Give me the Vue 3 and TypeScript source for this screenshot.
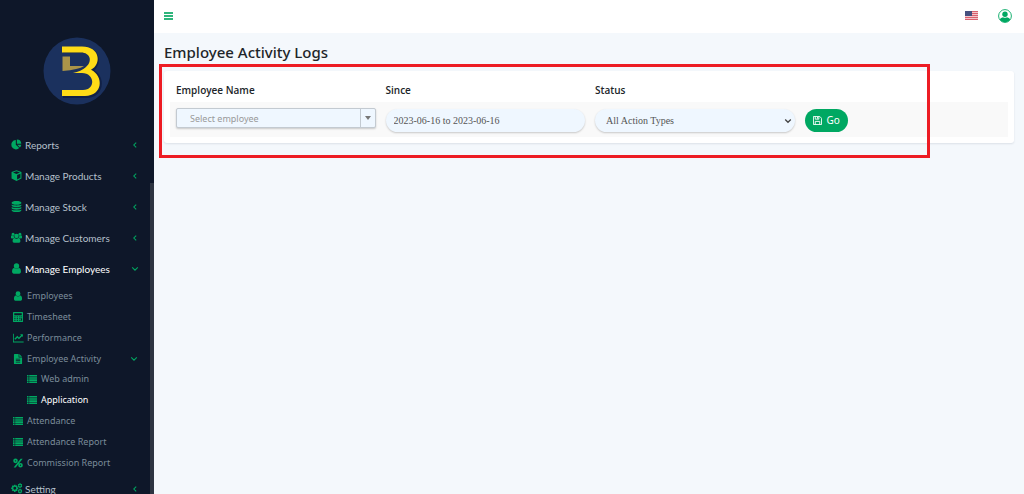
<script setup lang="ts">
import { ref } from 'vue'

interface NavItem {
  label: string
  icon: string
  arrow?: 'left' | 'down'
  active?: boolean
  nested?: boolean
}

const icons: Record<string, string> = {
  pie: 'M7 1.500A6.800 6.800 0 1 0 12 13L7 8.400zM8.500 .8V7H15A6.500 6.500 0 0 0 8.500 .8zM9 8.500L13 12.200A6.500 6.500 0 0 0 15 8.500z',
  cube: 'M8 .3L15.200 3V12.300L8 16L.8 12.300V3zM8 1.900L2.900 3.800L8 5.800L13.100 3.800zM8.900 7.400V13.800L13.700 11.300V5.500z',
  database: 'M8 0C12 0 15 1 15 2.300V3.400C15 4.600 12 5.600 8 5.600S1 4.600 1 3.400V2.300C1 1 4 0 8 0zM1 5.200C3.500 7 12.500 7 15 5.200V7C15 8.200 12 9.100 8 9.100S1 8.200 1 7zM1 8.700C3.500 10.500 12.500 10.500 15 8.700V10.500C15 11.700 12 12.600 8 12.600S1 11.700 1 10.500zM1 12.200C3.500 14 12.500 14 15 12.200V13.700C15 15 12 16 8 16S1 15 1 13.700z',
  users: 'M3 1A2.200 2.200 0 1 1 3 5.400A2.200 2.200 0 0 1 3 1zM13 1A2.200 2.200 0 1 1 13 5.400A2.200 2.200 0 0 1 13 1zM8 2.500A3.200 3.200 0 1 1 8 8.900A3.200 3.200 0 0 1 8 2.500zM0 9V6.500Q0 5 1.300 5.200Q3 6.400 4.200 5.800Q4.200 7.600 5 8.300Q3.500 8.300 2.700 9.300zM16 9V6.500Q16 5 14.700 5.200Q13 6.400 11.800 5.800Q11.800 7.600 11 8.300Q12.500 8.300 13.300 9.300zM2.300 13.500Q2.300 8.800 5 8.600Q8 10.800 11 8.600Q13.700 8.800 13.700 13.500Q13.700 15.500 11.700 15.500H4.300Q2.300 15.500 2.300 13.500z',
  user: 'M8 .5A3.900 3.900 0 1 1 8 8.300A3.900 3.900 0 0 1 8 .5zM4.500 7.300Q8 10.500 11.500 7.300Q14.500 7.500 14.500 12.900Q14.500 15.500 12.200 15.500H3.800Q1.500 15.500 1.500 12.900Q1.500 7.500 4.500 7.300z',
  calculator: 'M1 0H15Q16 0 16 1V15Q16 16 15 16H1Q0 16 0 15V1Q0 0 1 0zM2 2V5H14V2zM2 7V8.500H4V7zM6 7V8.500H8V7zM10 7V8.500H12V7zM13 7V8.500H14.500V7zM2 10V11.500H4V10zM6 10V11.500H8V10zM10 10V11.500H12V10zM13 10V14H14.500V10zM2 13V14.500H4V13zM6 13V14.500H8V13zM10 13V14.500H12V13z',
  chart: 'M0 1H1.300V13.700H17V15H0zM15.800 2V6.500L14.400 5.100L9.500 10L7 7.500L3.700 10.800L2.200 9.300L7 4.500L9.500 7L12.900 3.600L11.300 2z',
  file: 'M1.500 1Q1.500 0 2.500 0H9V5.500H14.500V15Q14.500 16 13.500 16H2.500Q1.500 16 1.500 15zM10 0L14.500 4.500H10zM4.500 7.500V8.700H11.500V7.500zM4.500 10V11.200H11.500V10zM4.500 12.500V13.700H11.500V12.500z',
  list: 'M0 1.500H2.500V4H0zM3.500 1.500H16V4H3.500zM0 5H2.500V7.500H0zM3.500 5H16V7.500H3.500zM0 8.500H2.500V11H0zM3.500 8.500H16V11H3.500zM0 12H2.500V14.500H0zM3.500 12H16V14.500H3.500z',
  percent: 'M12.200 1H15.500L4.300 15H1zM4 .8A3.700 3.700 0 1 1 4 8.200A3.700 3.700 0 0 1 4 .8zM4 3.500A1 1 0 1 0 4 5.500A1 1 0 0 0 4 3.500zM12 7.800A3.700 3.700 0 1 1 12 15.200A3.700 3.700 0 0 1 12 7.800zM12 10.500A1 1 0 1 0 12 12.500A1 1 0 0 0 12 10.500z',
  gears: 'M4.700 2.500H6.500L6.900 4.100L8.300 3.300L9.600 4.600L8.800 6L10.500 6.500V8.700L8.900 9.200L9.600 10.600L8.300 12L6.900 11.200L6.500 13H4.500L4 11.200L2.600 12L1.200 10.600L2 9.200L.3 8.700V6.600L2 6.100L1.200 4.700L2.600 3.300L4.100 4.100zM5.500 5.600A2.100 2.100 0 1 0 5.500 9.800A2.100 2.100 0 0 0 5.500 5.600zM12.300 .5H14L14.300 1.600L15.600 1.500L16.300 2.900L15.500 3.800L16.300 4.900L15.500 6.200L14.300 6L13.700 7.200H12.400L11.800 6L10.600 6.100L10 4.900L10.800 3.800L10 2.800L10.700 1.500L12 1.600zM13.100 2.700A1.200 1.200 0 1 0 13.100 5.100A1.200 1.200 0 0 0 13.100 2.700zM12.300 8.500H14L14.300 9.600L15.600 9.500L16.300 10.900L15.500 11.800L16.300 12.900L15.500 14.200L14.300 14L13.700 15.200H12.400L11.800 14L10.600 14.100L10 12.900L10.800 11.800L10 10.800L10.700 9.500L12 9.600zM13.100 10.700A1.200 1.200 0 1 0 13.100 13.100A1.200 1.200 0 0 0 13.100 10.700z',
}

const mainItems: NavItem[] = [
  { label: 'Reports', icon: 'pie', arrow: 'left' },
  { label: 'Manage Products', icon: 'cube', arrow: 'left' },
  { label: 'Manage Stock', icon: 'database', arrow: 'left' },
  { label: 'Manage Customers', icon: 'users', arrow: 'left' },
  { label: 'Manage Employees', icon: 'user', arrow: 'down', active: true },
]

const employeeItems: NavItem[] = [
  { label: 'Employees', icon: 'user' },
  { label: 'Timesheet', icon: 'calculator' },
  { label: 'Performance', icon: 'chart' },
  { label: 'Employee Activity', icon: 'file', arrow: 'down' },
  { label: 'Web admin', icon: 'list', nested: true },
  { label: 'Application', icon: 'list', nested: true, active: true },
  { label: 'Attendance', icon: 'list' },
  { label: 'Attendance Report', icon: 'list' },
  { label: 'Commission Report', icon: 'percent' },
]

const settingItems: NavItem[] = [{ label: 'Setting', icon: 'gears', arrow: 'left' }]

const groups = [
  { name: 'main', items: mainItems },
  { name: 'sub', items: employeeItems },
  { name: 'main', items: settingItems },
]

const arrows = { left: 'M6.500 2L3.500 5L6.500 8', down: 'M1.500 3L5 6.500L8.500 3' }

const employee = ref('')
const since = ref('2023-06-16 to 2023-06-16')
const status = ref('all')
</script>

<template>
  <div class="layout">
    <aside class="sidebar">
      <a class="brand" href="#" aria-label="Home">
        <svg viewBox="0 0 68 68">
          <circle cx="34" cy="34" r="33.500" fill="#1b315e" />
          <path d="M20 13H40C57 13 56 31 44 34C60 36 60 58 43 58H20" fill="none" stroke="#0b1738" stroke-width="6" opacity=".6" />
          <path d="M19.500 19.500H27V29H41Q36 32.500 19.500 34z" fill="#aa9449" />
          <path d="M19 9.500H39C57 9.500 59 27 48 32.800C61 39 60 59 42 59H19V53H40C53 53 52 36 39 36H30Q38 34.500 43 30C50 24 47 15.500 38 15.500H19z" fill="#ffdc17" />
        </svg>
      </a>
      <nav>
        <ul v-for="(group, index) in groups" :key="index" :class="group.name">
          <li v-for="item in group.items" :key="item.label">
            <a href="#" :class="{ active: item.active, nested: item.nested }">
              <svg class="icon" viewBox="0 0 16 16"><path :d="icons[item.icon]" fill-rule="evenodd" /></svg>
              <span>{{ item.label }}</span>
              <svg v-if="item.arrow" class="arrow" viewBox="0 0 10 10"><path :d="arrows[item.arrow]" /></svg>
            </a>
          </li>
        </ul>
      </nav>
      <div class="scroll-thumb"></div>
    </aside>

    <div class="content">
      <header>
        <button class="plain" type="button" aria-label="Toggle menu">
          <svg class="bars" viewBox="0 0 9 8"><path d="M0 0H9V2H0zM0 3H9V5H0zM0 6H9V8H0z" /></svg>
        </button>
        <div class="tools">
          <button class="plain" type="button" aria-label="Language">
            <svg class="flag" viewBox="0 0 13 9">
              <path fill="#f3c5cb" d="M0 0H13V9H0z" />
              <path fill="#d9606e" d="M0 0H13V1H0zM0 2H13V3H0zM0 4H13V5H0zM0 6H13V7H0zM0 8H13V9H0z" />
              <path fill="#46507f" d="M0 0H7V5H0z" />
            </svg>
          </button>
          <button class="plain" type="button" aria-label="Account">
            <svg class="account" viewBox="0 0 14 14">
              <circle cx="7" cy="7" r="6.400" fill="#fff" stroke="#00a862" stroke-width=".9" />
              <circle cx="7" cy="5.300" r="2.700" fill="#00a862" />
              <path d="M1.700 10.300Q3 8.500 5 8.200Q7 9.500 9 8.200Q11 8.500 12.300 10.300A6.300 6.300 0 0 1 1.700 10.300z" fill="#00a862" />
            </svg>
          </button>
        </div>
      </header>

      <main>
        <h1>Employee Activity Logs</h1>
        <form class="card" @submit.prevent>
          <table>
            <thead>
              <tr>
                <th scope="col"><label for="employee">Employee Name</label></th>
                <th scope="col"><label for="since">Since</label></th>
                <th scope="col"><label for="status">Status</label></th>
                <td></td>
              </tr>
            </thead>
            <tbody>
              <tr>
                <td>
                  <div class="combo">
                    <input id="employee" v-model="employee" type="text" placeholder="Select employee" />
                    <button type="button" aria-label="Show employees">
                      <svg viewBox="0 0 6 4"><path d="M0 0H6L3 4z" /></svg>
                    </button>
                  </div>
                </td>
                <td><input id="since" v-model="since" class="pill" type="text" /></td>
                <td>
                  <div class="select">
                    <select id="status" v-model="status" class="pill">
                      <option value="all">All Action Types</option>
                    </select>
                    <svg viewBox="0 0 8 8"><path d="M1.200 2.500L4 5.300L6.800 2.500" /></svg>
                  </div>
                </td>
                <td>
                  <button class="go" type="submit">
                    <svg viewBox="0 0 10 10">
                      <path d="M.5 .5H7.500L9.500 2.500V9.500H.5zM2.500 .5V3.500H6.500V.5M2.500 9.500V6H7.500V9.500" />
                      <path d="M5 1V3" />
                    </svg>
                    Go
                  </button>
                </td>
              </tr>
            </tbody>
          </table>
        </form>
        <div class="highlight"></div>
      </main>
    </div>
  </div>
</template>

<style>
body {
  margin: 0;
  background: #f4f8fc;
}
</style>

<style scoped>
* {
  box-sizing: border-box;
}

.layout {
  display: flex;
  height: 100vh;
  overflow: hidden;
  font-family: "Noto Sans", "Open Sans", sans-serif;
  font-size: 9px;
  color: #212529;
}

.sidebar {
  position: relative;
  flex: 0 0 154px;
  overflow: hidden;
  background: #0e1729;
  line-height: 12px;
}

.brand {
  display: block;
  width: 68px;
  margin: 37px auto 24px 43px;
}

.brand svg {
  display: block;
  width: 68px;
  height: 68px;
}

ul {
  margin: 0;
  padding: 0;
  list-style: none;
}

.sub {
  display: grid;
  grid-auto-rows: 1fr;
  height: 189px;
  padding-top: 2px;
}

nav a {
  display: flex;
  align-items: center;
  height: 100%;
  padding: 0 15px 0 11px;
  color: #b5c0cb;
  text-decoration: none;
  white-space: nowrap;
}

.main a {
  height: 31px;
  font-family: Lato, "Noto Sans", sans-serif;
  font-size: 10px;
}

.sub a {
  padding: 0 16px 0 13px;
  color: #7b8c9a;
}

.sub a.nested {
  padding-left: 27px;
}

nav a.active {
  color: #fff;
}

.icon {
  width: 11px;
  height: 11px;
  margin-right: 3px;
  overflow: visible;
  fill: #00a862;
}

.sub .icon {
  width: 10px;
  height: 10px;
  margin-right: 4px;
}

.arrow {
  width: 8px;
  height: 8px;
  margin-left: auto;
  fill: none;
  stroke: #00a862;
  stroke-width: 1.3;
}

.scroll-thumb {
  position: absolute;
  top: 183px;
  right: 0;
  bottom: 0;
  width: 4px;
  background: #2d3441;
}

.content {
  flex: 1;
  min-width: 0;
}

header {
  display: flex;
  align-items: center;
  justify-content: space-between;
  height: 33px;
  padding: 0 12px 2px 10px;
  background: #fff;
}

.tools {
  display: flex;
  align-items: center;
  gap: 20px;
}

button {
  font: inherit;
  cursor: pointer;
}

.plain {
  display: block;
  padding: 0;
  border: 0;
  background: none;
}

.plain svg {
  display: block;
}

.bars {
  width: 9px;
  height: 8px;
  fill: #2fb57c;
}

.flag {
  width: 13px;
  height: 9px;
}

.account {
  width: 14px;
  height: 14px;
}

main {
  position: relative;
  padding: 8px 10px;
}

h1 {
  margin: 0 0 8px;
  font-size: 15px;
  font-weight: 500;
  line-height: 22px;
}

.card {
  padding: 6px;
  border-radius: 3px;
  background: #fff;
  box-shadow: 0 1px 2px rgba(40, 60, 80, 0.12);
}

table {
  width: 100%;
  table-layout: fixed;
  border-collapse: collapse;
}

th,
td {
  padding: 0 4px 0 6px;
  text-align: left;
  vertical-align: middle;
}

thead tr {
  height: 25px;
}

th {
  font-family: "Open Sans", "Noto Sans", sans-serif;
  font-size: 10px;
  font-weight: 600;
}

tbody tr {
  height: 35px;
  background: #f9f9f9;
}

tbody td {
  padding-top: 1px;
}

.combo {
  display: flex;
  height: 20px;
  margin-bottom: 4px;
  border: 1px solid #c3cad1;
  border-radius: 2px;
  background: #eff7ff;
  box-shadow: 0 1px 2px rgba(0, 0, 0, 0.2);
}

.combo input {
  flex: 1;
  min-width: 0;
  padding: 0 13px;
  border: 0;
  background: none;
  color: #666;
  font: inherit;
}

.combo input::placeholder {
  color: #999;
}

.combo button {
  width: 15px;
  padding: 0;
  border: 0;
  border-left: 1px solid #c3cad1;
  background: none;
}

.combo svg {
  display: block;
  width: 6px;
  height: 4px;
  margin: auto;
  fill: #777;
}

.pill {
  display: block;
  width: 100%;
  height: 23px;
  padding: 0 8px;
  border: 0;
  border-radius: 12px;
  background: #eff7ff;
  box-shadow: 0 1px 2px rgba(0, 0, 0, 0.2);
  color: #555;
  font-family: "Liberation Serif", serif;
  font-size: 10px;
}

.select {
  position: relative;
}

.select select {
  padding: 0 11px;
  appearance: none;
}

.select svg {
  position: absolute;
  top: 8px;
  right: 3px;
  width: 8px;
  height: 8px;
  fill: none;
  stroke: #444;
  stroke-width: 1.3;
  pointer-events: none;
}

.go {
  display: flex;
  align-items: center;
  gap: 5px;
  height: 23px;
  padding: 0 8px;
  border: 0;
  border-radius: 12px;
  background: #00a862;
  color: #fff;
  font-size: 10px;
}

.go svg {
  width: 9px;
  height: 9px;
  fill: none;
  stroke: #fff;
}

.highlight {
  position: absolute;
  top: 31px;
  right: 94px;
  bottom: -7px;
  left: 5px;
  border: 3px solid #ed1c24;
  pointer-events: none;
}
</style>
